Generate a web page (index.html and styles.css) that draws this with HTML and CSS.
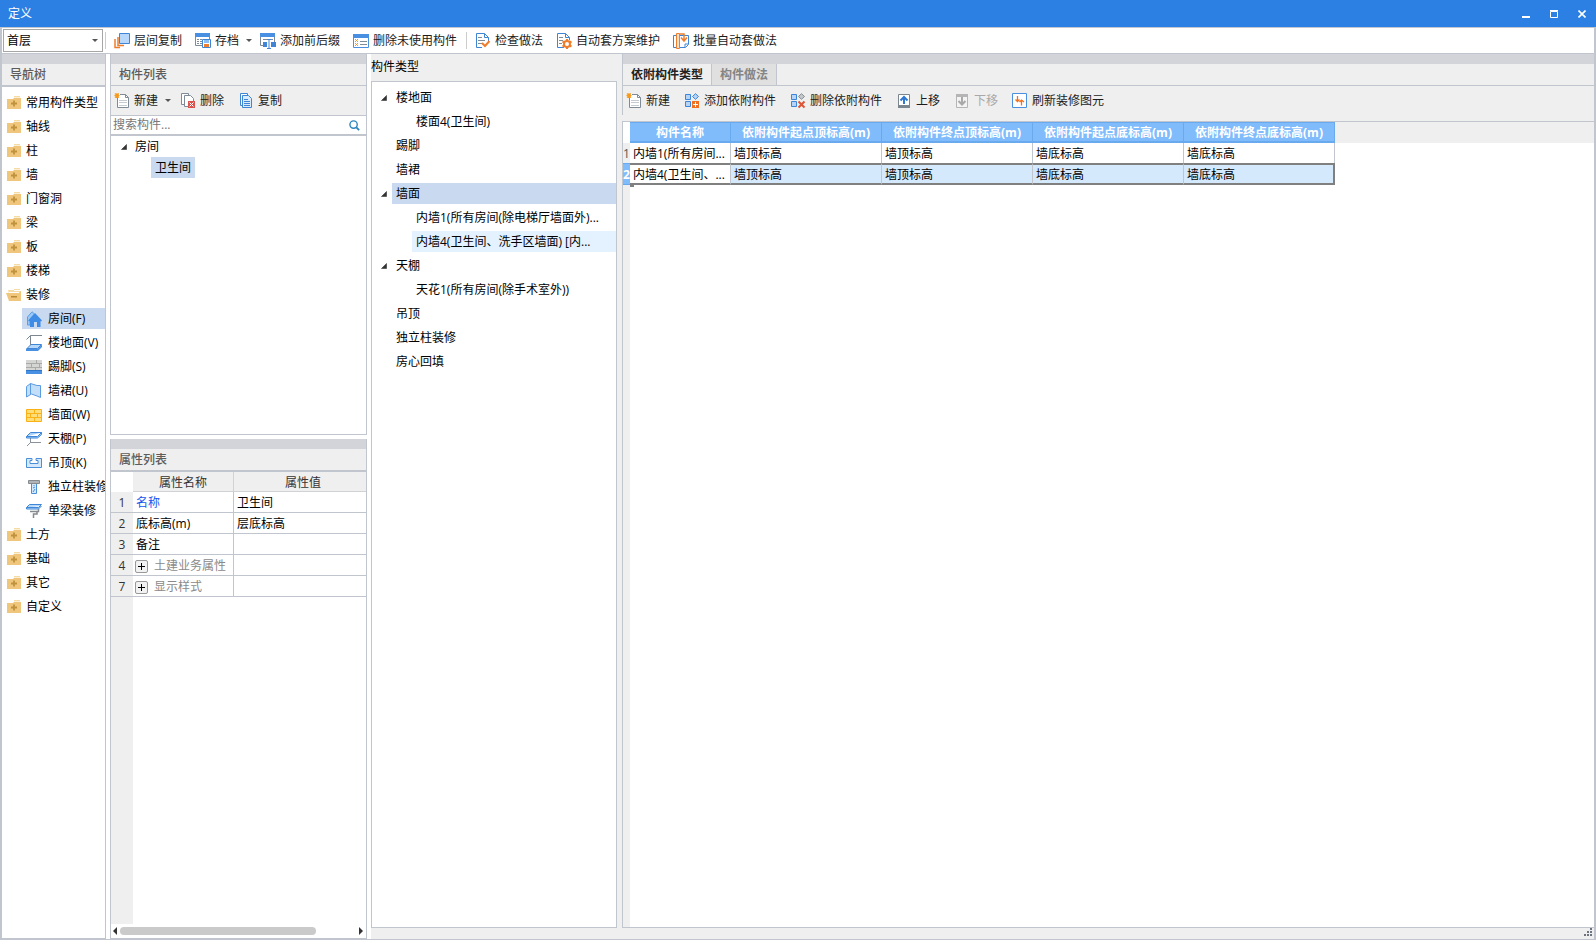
FILE: index.html
```html
<!DOCTYPE html>
<html lang="zh-CN">
<head>
<meta charset="utf-8">
<title>定义</title>
<link rel="stylesheet" href="styles.css">
</head>
<body>
<svg class="sprite" aria-hidden="true">
  <symbol id="folder" viewBox="0 0 16 16"><path fill="#f5dca6" d="M8 1h6v1.500H8z"/><path fill="#efc67c" d="M1 4h6l1-1h7v11H1z"/><path stroke="#c0923c" stroke-width="1.800" d="M8 5.500v6M5 8.500h6"/></symbol>
  <symbol id="folder-open" viewBox="0 0 16 16"><path fill="#f5dca6" d="M8 2h6v1H8zM2 3h6v1h7v3H3z"/><path fill="#fff" d="M3 5h10v1H3z"/><path fill="#efc67c" d="M0 6h13l2-2v10H3z"/><path fill="#b98a35" d="M5 9h6v1.500H5z"/></symbol>
  <symbol id="house" viewBox="0 0 16 16"><path fill="#9cc8f5" stroke="#5a9fe6" d="M1.500 14V6L6 .8 8.500 3 4 8v6z"/><path fill="#3f8ce6" d="M9 2l7 7.500-1 1-.5-.5V16H11v-5H8v5H4V10l-1 .5-.8-1z"/></symbol>
  <symbol id="floor" viewBox="0 0 16 16"><path fill="none" stroke="#7d8790" d="M.5 4.500l4-4H16M4.500.5v10"/><path fill="#4a90e2" d="M0 13.500h12l4-4V12l-4 4H0z"/><path fill="#b5d8fa" stroke="#3f86d6" d="M1 13.500l4-4h10.500l-4 4z"/></symbol>
  <symbol id="skirting" viewBox="0 0 16 16"><path fill="#d5d5d3" d="M0 1h16v10H0z"/><path fill="none" stroke="#a9abab" d="M0 4.500h16M0 8.500h16M10.500 1v3M5.500 5v3M13.500 5v3M9.500 9v2"/><path fill="#4a90e2" d="M0 11h16v4H0z"/><path fill="#2f76c9" d="M0 11h16v1H0z"/></symbol>
  <symbol id="dado" viewBox="0 0 16 16"><path fill="#c3def9" stroke="#5b9be2" d="M.5 3.500l4-3 6.500 2h3.500v12L11 13l-5.500-2-5 3zM4.500.5V11"/></symbol>
  <symbol id="wall" viewBox="0 0 16 16"><path fill="#ffde7a" stroke="#f9b115" d="M.5 2.500h15v12H.5zM1 6.500h14M1 10.500h14M8.500 3v3M4.500 7v3M11.500 7v3M8.500 11v3"/></symbol>
  <symbol id="canopy" viewBox="0 0 16 16"><path fill="none" stroke="#8a939b" d="M4.500 7v4.500L1 15M4 11.500h11"/><path fill="#a9d1f8" stroke="#3f86d6" d="M.5 5.500l4-4h11l-4 4zM.5 5.500V7h11l4-3.500v-2"/></symbol>
  <symbol id="ceiling" viewBox="0 0 16 16"><path fill="#d5e9fc" stroke="#4a90d9" d="M.5 3.500H6v2H4v3h8v-3h-2v-2h5.500v9H.5z"/></symbol>
  <symbol id="column" viewBox="0 0 16 16"><path fill="#b1b4b7" stroke="#858a8e" d="M2.500 1.500h11v3h-11z"/><path fill="#d5e9fc" stroke="#4a90d9" d="M5.500 5v9.500h5V5M8 6v1M7 9l2-1M7 13l2-3"/></symbol>
  <symbol id="beam" viewBox="0 0 16 16"><path fill="none" stroke="#858a8e" stroke-width="1.500" d="M4 8.500h8.500V6M11 9v2H7.500v4"/><path fill="#b5d8fa" stroke="#3f86d6" d="M.5 4.500l3-3h12l-3 3zM.5 4.500V6h12l3-3"/></symbol>
  <symbol id="layers" viewBox="0 0 16 16"><path fill="none" stroke="#ef7d2c" stroke-width="1.500" d="M1 6v8.500h5M4 4v8.500h6"/><path fill="#b8d8fb" stroke="#3e85d5" d="M5.500.5h10v10h-10z"/></symbol>
  <symbol id="archive" viewBox="0 0 16 16"><path fill="#fff" stroke="#7f8b96" d="M.5 1.500h14v11H.5z"/><path fill="#4a90e2" d="M0 0h15v4H0z"/><path stroke="#7f8b96" d="M2 6.500h2M5 6.500h2M8 6.500h5M2 8.500h2M5 8.500h2M2 10.500h2M5 10.500h2"/><path fill="#fff" stroke="#3e85d5" d="M7.500 6.500h8v8h-8z"/><path fill="#8bbcf3" d="M9 7h5v3H9z"/><path fill="#ef7d2c" d="M9 11h5v3H9z"/></symbol>
  <symbol id="affix" viewBox="0 0 16 16"><path fill="#fff" stroke="#7f8b96" d="M.5 1.500h14v11H.5z"/><path fill="#4a90e2" d="M0 0h15v4H0z"/><path stroke="#7f8b96" d="M3 6.500h10"/><path fill="#3e85d5" d="M3 9h5v5H3zM11 9h5v5h-5z"/><path fill="#fff" d="M7 6h4v10H7z"/><path fill="none" stroke="#3e85d5" d="M7 6.500h4M9 7v8M7 15.500h4"/></symbol>
  <symbol id="remove-unused" viewBox="0 0 16 16"><path fill="#fff" stroke="#4a90e2" d="M.5 1.500h15v13H.5z"/><path fill="#4a90e2" d="M0 1h16v4H0z"/><path stroke="#7f8b96" d="M7 8.500h7M7 11.500h7"/><path stroke="#ef9a2c" d="M2 6l3 3M5 6L2 9M2 10l3 3M5 10l-3 3"/></symbol>
  <symbol id="check" viewBox="0 0 16 16"><path fill="#fff" stroke="#3e85d5" d="M1.500.5h8l4 4v10h-12z"/><path fill="none" stroke="#3e85d5" d="M9.500.5v4h4"/><path stroke="#7f8b96" d="M3 4.500h4M3 7.500h7M3 10.500h4"/><path fill="#fff" d="M7 9h8v6H7z"/><path fill="none" stroke="#ef7d2c" stroke-width="2" d="M7 10l3 3 4.500-5"/></symbol>
  <symbol id="scheme" viewBox="0 0 16 16"><path fill="#fff" stroke="#3e85d5" d="M1.500.5h8l4 4v10h-12z"/><path fill="none" stroke="#3e85d5" d="M9.500.5v4h4"/><path stroke="#7f8b96" d="M3 4.500h4M3 7.500h4M3 10.500h3"/><circle cx="11" cy="11" r="4.500" fill="#fff"/><circle cx="11" cy="11" r="3" fill="none" stroke="#ef7d2c" stroke-width="2"/><path stroke="#ef7d2c" stroke-width="2" d="M11 6v2M11 14v2M6.500 8.500l2 1M13.500 12.500l2 1M6.500 13.500l2-1M13.500 9.500l2-1"/></symbol>
  <symbol id="batch" viewBox="0 0 16 16"><path fill="#fff" stroke="#3e85d5" d="M.5 2.500h4v12h-4zM6.500 2.500h9v9l-3 3h-6z"/><path fill="#fbe0ca" stroke="#ef7d2c" d="M3.500.5h3v15h-3z"/><path fill="none" stroke="#ef7d2c" stroke-width="1.500" d="M7 1h4v6M8 4.500L11 8l3-3.500"/><path fill="none" stroke="#3e85d5" d="M12 14v-3h3"/></symbol>
  <symbol id="new" viewBox="0 0 16 16"><path fill="#fff" stroke="#7f8b96" d="M3.500 1.500h8l3 3v10h-11z"/><path fill="none" stroke="#7f8b96" d="M11.500 1.500v3h3"/><path stroke="#c6cbd0" d="M5 7.500h8M5 9.500h8M5 12.500h8"/><path fill="#fff" d="M1 0h5v5H1z"/><path stroke="#f59a1f" stroke-width="1.200" d="M1 .5l4 4M5 .5l-4 4M3 0v5M.5 2.500h5"/></symbol>
  <symbol id="delete" viewBox="0 0 16 16"><path fill="#fff" stroke="#7f8b96" d="M1.500.5h7v11h-7z"/><path fill="#fff" stroke="#7f8b96" d="M4.500 2.500h6l3 3v8h-9z"/><path fill="#d9534f" d="M8 8h7v7H8z"/><path stroke="#fff" d="M9.500 9.500l4 4M13.500 9.500l-4 4"/></symbol>
  <symbol id="copy" viewBox="0 0 16 16"><path fill="#fff" stroke="#3e85d5" d="M2.500.5h7v12h-7z"/><path fill="#d9ebfd" stroke="#3e85d5" d="M4.500 2.500h6l3 3v9h-9z"/><path stroke="#3e85d5" d="M6 6.500h4M6 8.500h6M6 10.500h6M6 12.500h6"/></symbol>
  <symbol id="attach-add" viewBox="0 0 16 16"><path fill="#b5d4f8" stroke="#3e85d5" d="M1.500 1.500h5v5h-5zM1.500 8.500h5v5h-5zM11.500.7l3 2.800-3 2.800-3-2.800z"/><path fill="#ef7020" d="M8 8h7v7H8z"/><path stroke="#fff" d="M11.500 9v5M9 11.500h5"/></symbol>
  <symbol id="attach-del" viewBox="0 0 16 16"><path fill="#b5d4f8" stroke="#3e85d5" d="M1.500 1.500h5v5h-5zM1.500 8.500h5v5h-5z"/><path fill="#c4c8cc" stroke="#858d94" d="M11.500.7l3 2.800-3 2.800-3-2.800z"/><path stroke="#dd5535" stroke-width="2" d="M8.500 8.500l6 6M14.500 8.500l-6 6"/></symbol>
  <symbol id="up" viewBox="0 0 16 16"><path fill="#fff" stroke="#7b868f" d="M2.500 1.500h11v13h-11z"/><path fill="#7b868f" d="M2 12h12v3H2z"/><path fill="none" stroke="#2e78d2" stroke-width="2" d="M8 11V4M4.500 7.500L8 4l3.500 3.500"/></symbol>
  <symbol id="down" viewBox="0 0 16 16"><path fill="#f4f4f4" stroke="#b5b5b5" d="M2.500 1.500h11v13h-11z"/><path fill="#b5b5b5" d="M2 1h12v3H2z"/><path fill="none" stroke="#a9a9a9" stroke-width="2" d="M8 4v7M4.500 8L8 11.500 11.500 8"/></symbol>
  <symbol id="refresh" viewBox="0 0 16 16"><path fill="#fff" stroke="#4a90e2" d="M.5.500h14v14H.5z"/><path fill="none" stroke="#ef7020" stroke-width="1.300" d="M5.500 3v5.500M3.500 6.500l2 2 2-2M9.500 12.500V7M7.500 9l2-2 2.500 2"/></symbol>
  <symbol id="search" viewBox="0 0 12 12"><circle cx="5" cy="5" r="4" fill="none" stroke="#2a84bd" stroke-width="1.500"/><path stroke="#2a84bd" stroke-width="2" d="M8 8l3 3"/></symbol>
  <symbol id="twist" viewBox="0 0 7 7"><path fill="#333" stroke="#111" stroke-width=".5" d="M6.500.5v6h-6z"/></symbol>
</svg>

<div class="window">
  <header class="titlebar">
    <span>定义</span>
    <div class="winbtns">
      <button aria-label="最小化"><svg width="8" height="8"><path fill="#fff" d="M0 6h8v2H0z"/></svg></button>
      <button aria-label="最大化"><svg width="8" height="8"><path fill="none" stroke="#fff" d="M.5 1.500h7v6h-7zM0 .5h8"/></svg></button>
      <button aria-label="关闭"><svg width="8" height="8"><path stroke="#fff" stroke-width="1.600" d="M.5.500l7 7M7.500.500l-7 7"/></svg></button>
    </div>
  </header>

  <div class="mainbar">
    <div class="combo"><select aria-label="楼层"><option>首层</option></select><i class="caret"></i></div>
    <i class="sep"></i>
    <div class="tools main-tools">
      <button class="tool"><svg><use href="#layers"/></svg>层间复制</button>
      <button class="tool"><svg><use href="#archive"/></svg>存档<i class="caret"></i></button>
      <button class="tool"><svg><use href="#affix"/></svg>添加前后缀</button>
      <button class="tool"><svg><use href="#remove-unused"/></svg>删除未使用构件</button>
    </div>
    <i class="sep"></i>
    <div class="tools main-tools">
      <button class="tool"><svg><use href="#check"/></svg>检查做法</button>
      <button class="tool"><svg><use href="#scheme"/></svg>自动套方案维护</button>
      <button class="tool"><svg><use href="#batch"/></svg>批量自动套做法</button>
    </div>
  </div>

  <div class="workspace">
    <nav class="nav panel">
      <div class="strip"></div>
      <h2 class="ptitle thick">导航树</h2>
      <ul class="navtree">
        <li><button><svg><use href="#folder"/></svg>常用构件类型</button></li>
        <li><button><svg><use href="#folder"/></svg>轴线</button></li>
        <li><button><svg><use href="#folder"/></svg>柱</button></li>
        <li><button><svg><use href="#folder"/></svg>墙</button></li>
        <li><button><svg><use href="#folder"/></svg>门窗洞</button></li>
        <li><button><svg><use href="#folder"/></svg>梁</button></li>
        <li><button><svg><use href="#folder"/></svg>板</button></li>
        <li><button><svg><use href="#folder"/></svg>楼梯</button></li>
        <li><button><svg><use href="#folder-open"/></svg>装修</button></li>
        <li class="sub on"><button><svg><use href="#house"/></svg>房间(F)</button></li>
        <li class="sub"><button><svg><use href="#floor"/></svg>楼地面(V)</button></li>
        <li class="sub"><button><svg><use href="#skirting"/></svg>踢脚(S)</button></li>
        <li class="sub"><button><svg><use href="#dado"/></svg>墙裙(U)</button></li>
        <li class="sub"><button><svg><use href="#wall"/></svg>墙面(W)</button></li>
        <li class="sub"><button><svg><use href="#canopy"/></svg>天棚(P)</button></li>
        <li class="sub"><button><svg><use href="#ceiling"/></svg>吊顶(K)</button></li>
        <li class="sub"><button><svg><use href="#column"/></svg>独立柱装修</button></li>
        <li class="sub"><button><svg><use href="#beam"/></svg>单梁装修</button></li>
        <li><button><svg><use href="#folder"/></svg>土方</button></li>
        <li><button><svg><use href="#folder"/></svg>基础</button></li>
        <li><button><svg><use href="#folder"/></svg>其它</button></li>
        <li><button><svg><use href="#folder"/></svg>自定义</button></li>
      </ul>
    </nav>

    <div class="middle">
      <section class="panel boxed complist">
        <div class="strip"></div>
        <h2 class="ptitle">构件列表</h2>
        <div class="tools bar">
          <button class="tool"><svg><use href="#new"/></svg>新建<i class="caret"></i></button>
          <button class="tool"><svg><use href="#delete"/></svg>删除</button>
          <button class="tool"><svg><use href="#copy"/></svg>复制</button>
        </div>
        <div class="search"><input type="text" placeholder="搜索构件..." aria-label="搜索构件"><svg><use href="#search"/></svg></div>
        <ul class="comptree">
          <li><button><svg><use href="#twist"/></svg>房间</button></li>
          <li class="leaf"><button>卫生间</button></li>
        </ul>
      </section>

      <section class="panel boxed props">
        <div class="strip"></div>
        <h2 class="ptitle thick">属性列表</h2>
        <div class="propbody">
          <table class="proptable">
            <colgroup><col class="c-no"><col class="c-name"><col></colgroup>
            <thead><tr><td class="corner"></td><th scope="col">属性名称</th><th scope="col">属性值</th></tr></thead>
            <tbody>
              <tr><th scope="row">1</th><td class="link">名称</td><td>卫生间</td></tr>
              <tr><th scope="row">2</th><td>底标高(m)</td><td>层底标高</td></tr>
              <tr><th scope="row">3</th><td>备注</td><td></td></tr>
              <tr><th scope="row">4</th><td class="group"><div><button aria-label="展开土建业务属性"></button>土建业务属性</div></td><td></td></tr>
              <tr><th scope="row">7</th><td class="group"><div><button aria-label="展开显示样式"></button>显示样式</div></td><td></td></tr>
            </tbody>
          </table>
        </div>
        <div class="hscroll">
          <svg width="4" height="8"><path fill="#333" d="M4 0v8L0 4z"/></svg>
          <div class="track"><div class="thumb"></div></div>
          <svg width="4" height="8"><path fill="#333" d="M0 0v8l4-4z"/></svg>
        </div>
      </section>
    </div>

    <section class="types">
      <h2>构件类型</h2>
      <ul class="typetree">
        <li><svg><use href="#twist"/></svg><button>楼地面</button></li>
        <li class="child"><button>楼面4(卫生间)</button></li>
        <li><button>踢脚</button></li>
        <li><button>墙裙</button></li>
        <li><svg><use href="#twist"/></svg><button class="on">墙面</button></li>
        <li class="child"><button>内墙1(所有房间(除电梯厅墙面外)...</button></li>
        <li class="child"><button class="hover">内墙4(卫生间、洗手区墙面) [内...</button></li>
        <li><svg><use href="#twist"/></svg><button>天棚</button></li>
        <li class="child"><button>天花1(所有房间(除手术室外))</button></li>
        <li><button>吊顶</button></li>
        <li><button>独立柱装修</button></li>
        <li><button>房心回填</button></li>
      </ul>
    </section>

    <main class="attach">
      <div class="attach-top">
        <div class="strip"></div>
        <div class="tabs" role="tablist">
          <button role="tab" aria-selected="true">依附构件类型</button>
          <button role="tab" aria-selected="false">构件做法</button>
        </div>
        <div class="tools">
          <button class="tool"><svg><use href="#new"/></svg>新建</button>
          <button class="tool"><svg><use href="#attach-add"/></svg>添加依附构件</button>
          <button class="tool"><svg><use href="#attach-del"/></svg>删除依附构件</button>
          <button class="tool"><svg><use href="#up"/></svg>上移</button>
          <button class="tool" disabled><svg><use href="#down"/></svg>下移</button>
          <button class="tool"><svg><use href="#refresh"/></svg>刷新装修图元</button>
        </div>
      </div>
      <div class="grid">
        <table>
          <colgroup><col class="g-no"><col class="g-name"><col class="g-val"><col class="g-val"><col class="g-val"><col class="g-val"></colgroup>
          <thead><tr><td class="corner"></td><th scope="col">构件名称</th><th scope="col">依附构件起点顶标高(m)</th><th scope="col">依附构件终点顶标高(m)</th><th scope="col">依附构件起点底标高(m)</th><th scope="col">依附构件终点底标高(m)</th></tr></thead>
          <tbody>
            <tr><th scope="row">1</th><td>内墙1(所有房间...</td><td>墙顶标高</td><td>墙顶标高</td><td>墙底标高</td><td>墙底标高</td></tr>
            <tr class="sel"><th scope="row">2</th><td>内墙4(卫生间、...</td><td>墙顶标高</td><td>墙顶标高</td><td>墙底标高</td><td>墙底标高</td></tr>
          </tbody>
        </table>
      </div>
      <footer class="status"><svg width="8" height="8"><path fill="#6d7480" d="M6 0h2v2H6zM3 3h2v2H3zM6 3h2v2H6zM0 6h2v2H0zM3 6h2v2H3zM6 6h2v2H6z"/></svg></footer>
    </main>
  </div>
</div>
</body>
</html>
```
FILE: styles.css
```css
:root {
  --line: #c1c5cd;
  --face: #efefef;
  --strip: #d3d4da;
  --pick: #c8d9f0;
}
* { box-sizing: border-box; }
body, h2, ul { margin: 0; padding: 0; }
body, button, input, select {
  font: 12px/20px "Open Sans", "Noto Sans CJK SC", sans-serif;
  color: #000;
}
ul { list-style: none; }
button {
  border: 0;
  padding: 0;
  background: none;
  text-align: left;
  white-space: nowrap;
}
.sprite { position: absolute; width: 0; height: 0; }

.window { display: flex; flex-direction: column; height: 100vh; background: #fff; }
.titlebar {
  display: flex;
  justify-content: space-between;
  align-items: center;
  height: 27px;
  padding-left: 8px;
  background: #2c80e3;
  color: #fff;
}
.winbtns { display: flex; }
.winbtns button { display: flex; justify-content: center; width: 28px; }

.mainbar {
  display: flex;
  align-items: center;
  height: 27px;
  padding-left: 1px;
  border: solid var(--line);
  border-width: 1px 2px;
  background: #fff;
}
.combo { position: relative; width: 100px; height: 23px; margin-right: 2px; }
.combo select {
  width: 100%;
  height: 100%;
  padding: 0 3px;
  border: 1px solid #a6a6a6;
  border-radius: 0;
  appearance: none;
  background: #fff;
}
.combo .caret { position: absolute; right: 5px; top: 10px; }
.caret { border: 3px solid transparent; border-top-color: #555; border-bottom: 0; }
.sep { width: 1px; height: 17px; background: #ccc; }
.tools { display: flex; align-items: center; gap: 14px; }
.main-tools { gap: 13px; padding: 0 9px 0 8px; }
.tool { display: flex; align-items: center; gap: 4px; color: #1c1c1c; }
.tool svg, .navtree svg { width: 16px; height: 16px; flex: none; }
.tool .caret { margin: 0 -5px 0 3px; }
.tool:disabled { color: #a8a8a8; }

.workspace {
  display: flex;
  flex: 1;
  min-height: 0;
  border: solid var(--line);
  border-width: 0 2px 1px;
}
.panel { display: flex; flex-direction: column; background: #fff; }
.strip { flex: none; height: 10px; background: var(--strip); }
.ptitle {
  flex: none;
  height: 22px;
  padding-left: 8px;
  background: var(--face);
  border-bottom: 1px solid var(--line);
  color: #5c5c5c;
  font: 500 12px/21px "Open Sans", "Noto Sans CJK SC", sans-serif;
}
.ptitle.thick { height: 23px; border-bottom-width: 2px; }

.nav { flex: none; width: 104px; border: solid var(--line); border-width: 0 1px 1px 0; overflow: hidden; }
.navtree { display: grid; gap: 3px; padding-top: 5px; }
.navtree li { padding-left: 4px; }
.navtree button { display: flex; align-items: center; gap: 4px; width: 100%; height: 21px; }
.navtree .sub { margin-left: 20px; }
.navtree .sub button { gap: 6px; }
.on { background: var(--pick); }

.middle { display: flex; flex-direction: column; gap: 4px; flex: none; width: 265px; padding: 0 4px; }
.boxed { border: 1px solid var(--line); border-top: 0; min-height: 0; }
.complist { flex: 381 1 0; }
.props { flex: 500 1 0; }
.bar { flex: none; height: 30px; padding-left: 3px; background: var(--face); border-bottom: 1px solid var(--line); }
.search { display: flex; align-items: center; flex: none; height: 20px; padding-right: 6px; border-bottom: 2px solid var(--line); }
.search input { flex: 1; min-width: 0; height: 18px; padding: 0 2px; border: 0; outline: 0; background: none; }
.search input::placeholder { color: #777; }
.search svg { width: 11px; height: 11px; }
.comptree button { display: flex; align-items: center; gap: 8px; height: 21px; padding-left: 10px; }
.comptree svg, .typetree svg { width: 6px; height: 6px; flex: none; }
.comptree .leaf button { margin-left: 40px; padding: 0 4px; background: var(--pick); }

table { border-collapse: separate; border-spacing: 0; table-layout: fixed; }
th, td { padding: 0 3px; white-space: nowrap; overflow: hidden; text-align: left; }
.propbody { flex: 1; min-height: 0; overflow: hidden; background: linear-gradient(to right, var(--face) 22px, #fff 22px); }
.proptable { width: 100%; }
.c-no { width: 22px; }
.c-name { width: 101px; }
.proptable th { padding: 0; font-weight: 400; text-align: center; background: var(--face); color: #333; }
.proptable thead th { height: 20px; padding-top: 2px; line-height: 17px; border-right: 1px solid #d0d2d6; border-bottom: 1px solid #d0d2d6; }
.proptable thead th:last-child { padding-left: 6px; }
.proptable tbody th, .proptable tbody td { height: 21px; padding-top: 2px; line-height: 18px; border-bottom: 1px solid var(--line); }
.proptable tbody td { border-right: 1px solid var(--line); }
.proptable tr > :last-child { border-right: 0; }
.corner { background: #fff; }
.link { color: #1456f0; }
.proptable .group { padding-left: 2px; color: #8a8a8a; }
.group div { display: flex; align-items: center; gap: 6px; }
.group button {
  width: 13px;
  height: 13px;
  border: 1px solid #999;
  border-radius: 2px;
  background:
    linear-gradient(#000, #000) center / 7px 1px no-repeat,
    linear-gradient(#000, #000) center / 1px 7px no-repeat,
    #f2f2f2;
}
.hscroll { display: flex; align-items: center; gap: 3px; flex: none; height: 14px; padding: 0 3px 0 2px; }
.track { flex: 1; }
.thumb { width: 83%; height: 8px; border-radius: 4px; background: #cacaca; }

.types { display: flex; flex-direction: column; flex: none; width: 251px; padding: 0 5px 11px 0; background: var(--face); }
.types h2 { height: 27px; font: 12px/26px "Open Sans", "Noto Sans CJK SC", sans-serif; }
.typetree { flex: 1; display: grid; align-content: start; gap: 3px; padding-top: 5px; border: 1px solid var(--line); background: #fff; }
.typetree li { display: flex; align-items: center; padding-left: 20px; }
.typetree svg { margin: 0 5px 0 -11px; }
.typetree .child { padding-left: 40px; }
.typetree button { flex: 1; height: 21px; padding-left: 4px; }
.hover { background: #e4f1fe; }

.attach { display: flex; flex-direction: column; flex: 1; min-width: 0; background: var(--face); }
.attach-top { height: 61px; margin-bottom: 6px; border-left: 1px solid var(--line); }
.tabs { display: flex; height: 22px; border-bottom: 1px solid var(--line); }
.tabs button { padding: 0 8px; border-right: 1px solid var(--line); background: #e0e0e0; color: #858585; font-weight: 700; }
.tabs button[aria-selected="true"] { background: var(--face); color: #222; }
.attach-top .tools { height: 29px; padding-left: 3px; }
.grid {
  flex: 1;
  min-height: 0;
  border: solid var(--line);
  border-width: 1px 0 1px 1px;
  background:
    linear-gradient(var(--face), var(--face)) 0 0 / 7px 100% no-repeat,
    linear-gradient(var(--face), var(--face)) 0 0 / 100% 21px no-repeat,
    #fff;
}
.grid table { width: 712px; }
.g-no { width: 7px; }
.g-name { width: 101px; }
.g-val { width: 151px; }
.grid thead th {
  height: 21px;
  padding: 2px 0 0;
  line-height: 16px;
  text-align: center;
  background: #80bbfb;
  color: #fff;
  border: solid #69a9ee;
  border-width: 1px 1px 1px 0;
  border-bottom: 2px solid #69a9ee;
}
.grid tbody td { height: 20px; padding-top: 2px; line-height: 18px; border-right: 1px solid var(--line); background: #fff; }
.grid tbody th { padding: 2px 0 0; font-weight: 400; line-height: 18px; color: #555; background: var(--face); overflow: visible; }
.grid .sel td { height: 22px; line-height: 16px; border-top: 2px solid #808080; border-bottom: 2px solid #808080; background: #d5e9fd; }
.grid .sel th { background: #80bbfb; color: #fff; font-weight: 700; border: solid #69a9ee; border-width: 1px 0; overflow: hidden; }
.grid .sel td:nth-child(2) { background: #fff; }
.grid .sel td:last-child { border-right: 2px solid #808080; }
.sel th + td { position: relative; overflow: visible; }
.sel th + td::after { content: ""; position: absolute; left: 0; bottom: -4px; width: 4px; height: 4px; background: #808080; }
.status { display: flex; justify-content: flex-end; height: 11px; padding: 0 2px 0 0; }
```
